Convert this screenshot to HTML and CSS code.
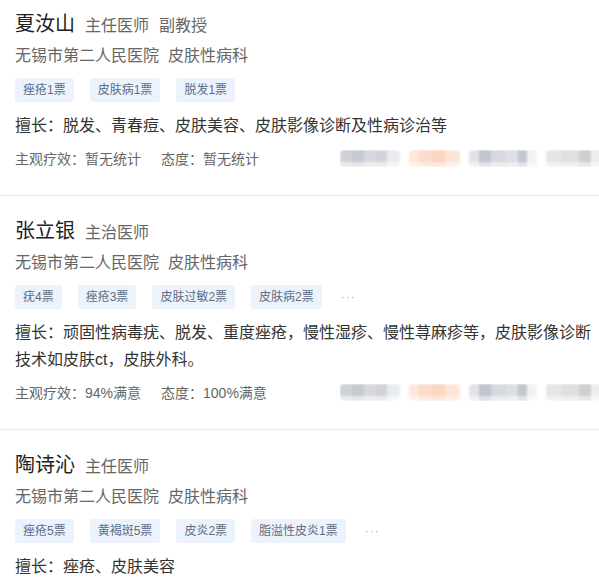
FILE: index.html
```html
<!DOCTYPE html>
<html lang="zh-CN">
<head>
<meta charset="utf-8">
<title>医生列表</title>
<link rel="stylesheet" href="styles.css">
</head>
<body>
<div class="list">
  <div class="doc">
    <div class="head"><span class="name">夏汝山</span><span class="title">主任医师</span><span class="title">副教授</span></div>
    <div class="hosp"><span>无锡市第二人民医院</span><span class="dept">皮肤性病科</span></div>
    <div class="tags"><span class="tag">痤疮1票</span><span class="tag">皮肤病1票</span><span class="tag">脱发1票</span></div>
    <p class="good">擅长：脱发、青春痘、皮肤美容、皮肤影像诊断及性病诊治等</p>
    <div class="stats">
      <span>主观疗效：暂无统计</span><span class="att">态度：暂无统计</span>
      <div class="blurs"><i class="b b1"></i><i class="b b2"></i><i class="b b3"></i><i class="b b4"></i></div>
    </div>
  </div>
  <div class="doc">
    <div class="head"><span class="name">张立银</span><span class="title">主治医师</span></div>
    <div class="hosp"><span>无锡市第二人民医院</span><span class="dept">皮肤性病科</span></div>
    <div class="tags"><span class="tag">疣4票</span><span class="tag">痤疮3票</span><span class="tag">皮肤过敏2票</span><span class="tag">皮肤病2票</span><span class="more">···</span></div>
    <p class="good">擅长：顽固性病毒疣、脱发、重度痤疮，慢性湿疹、慢性荨麻疹等，皮肤影像诊断技术如皮肤ct，皮肤外科。</p>
    <div class="stats">
      <span>主观疗效：94%满意</span><span class="att">态度：100%满意</span>
      <div class="blurs"><i class="b b1"></i><i class="b b2"></i><i class="b b3"></i><i class="b b4"></i></div>
    </div>
  </div>
  <div class="doc">
    <div class="head"><span class="name">陶诗沁</span><span class="title">主任医师</span></div>
    <div class="hosp"><span>无锡市第二人民医院</span><span class="dept">皮肤性病科</span></div>
    <div class="tags"><span class="tag">痤疮5票</span><span class="tag">黄褐斑5票</span><span class="tag">皮炎2票</span><span class="tag">脂溢性皮炎1票</span><span class="more">···</span></div>
    <p class="good">擅长：痤疮、皮肤美容</p>
  </div>
</div>
</body>
</html>
```

FILE: styles.css
```css
html, body {
  margin: 0;
  padding: 0;
  background: #fff;
  overflow: hidden;
}
body {
  font-family: "Liberation Sans", "Noto Sans CJK SC", sans-serif;
  color: #333;
}
.list {
  margin-top: -11px;
}
.doc {
  padding: 20px 0 27px 15px;
  border-bottom: 1px solid #ececec;
}
.head {
  display: flex;
  align-items: baseline;
  height: 30px;
  line-height: 30px;
}
.name {
  font-size: 20px;
  color: #222;
}
.title {
  font-size: 16px;
  color: #666;
  margin-left: 10px;
}
.hosp {
  margin-top: 6px;
  font-size: 16px;
  line-height: 22px;
  color: #666;
}
.dept {
  margin-left: 9px;
}
.tags {
  display: flex;
  align-items: center;
  margin-top: 11px;
  height: 24px;
}
.tag {
  height: 24px;
  line-height: 24px;
  padding: 0 8px;
  font-size: 12px;
  color: #5d6c86;
  background: #edf3fc;
  border-radius: 3px;
  margin-right: 16px;
}
.more {
  font-size: 12px;
  color: #b0b0b0;
  margin-left: 3px;
  letter-spacing: 1px;
}
.good {
  margin: 10px 0 0;
  font-size: 16px;
  line-height: 27px;
  color: #333;
}
.stats {
  display: flex;
  align-items: center;
  margin-top: 9px;
  height: 20px;
  font-size: 14px;
  color: #666;
  white-space: nowrap;
}
.att {
  margin-left: 20px;
}
.blurs {
  margin-left: auto;
  width: 259px;
  display: flex;
  gap: 9px;
  overflow: hidden;
  flex-shrink: 0;
}
.b {
  flex-shrink: 0;
  height: 17px;
  border-radius: 4px;
  filter: blur(1px);
  opacity: 0.85;
}
.b1 {
  width: 60px;
  background:
    linear-gradient(to bottom, transparent 70%, rgba(255,255,255,0.55) 70%),
    linear-gradient(to right, #c6cad2 0 20%, #bdc1ca 20% 40%, #cfd2d8 40% 60%, #c9ccd3 60% 78%, #e6e9ed 78%);
}
.b2 {
  width: 51px;
  background:
    linear-gradient(to bottom, transparent 70%, rgba(255,255,255,0.45) 70%),
    linear-gradient(to right, #fde4d5 0 20%, #fcd6c0 20% 45%, #fbcfb6 45% 70%, #fde1d0 70%);
}
.b3 {
  width: 68px;
  background:
    linear-gradient(to bottom, transparent 70%, rgba(255,255,255,0.5) 70%),
    linear-gradient(to right, #dcdfe5 0 15%, #b6bbc8 15% 32%, #cfd3da 32% 55%, #d7dae0 55% 72%, #b9bdc7 72% 86%, #eef0f3 86%);
}
.b4 {
  width: 60px;
  background:
    linear-gradient(to bottom, transparent 70%, rgba(255,255,255,0.5) 70%),
    linear-gradient(to right, #e2e2e4 0 25%, #dbdbdd 25% 55%, #c7c7c9 55% 75%, #ececed 75%);
}
```
